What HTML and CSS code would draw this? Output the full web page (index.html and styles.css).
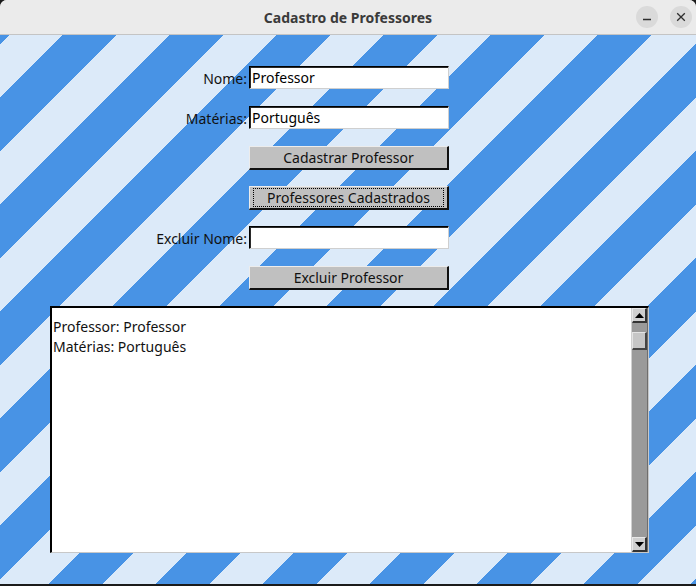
FILE: index.html
```html
<!DOCTYPE html>
<html lang="pt">
<head>
<meta charset="utf-8">
<title>Cadastro de Professores</title>
<link rel="stylesheet" href="styles.css">
</head>
<body>
<div class="window">
  <header class="titlebar">
    <span class="spacer"></span>
    <span class="title">Cadastro de Professores</span>
    <div class="controls">
      <span class="ctl">
        <svg width="22" height="22" viewBox="0 0 22 22"><path d="M7 13.5h8" stroke="#2e2e2e" stroke-width="1.3" fill="none"/></svg>
      </span>
      <span class="ctl">
        <svg width="22" height="22" viewBox="0 0 22 22"><path d="M7.2 7.2l7.6 7.6M14.8 7.2l-7.6 7.6" stroke="#2e2e2e" stroke-width="1.3" fill="none"/></svg>
      </span>
    </div>
  </header>
  <main class="client">
    <div class="form">
      <span class="lbl">Nome:</span><div class="entry">Professor</div>
      <span class="lbl">Matérias:</span><div class="entry">Português</div>
      <span class="lbl"></span><div class="btn">Cadastrar Professor</div>
      <span class="lbl"></span><div class="btn focused"><span class="focusring">Professores Cadastrados</span></div>
      <span class="lbl">Excluir Nome:</span><div class="entry"></div>
      <span class="lbl"></span><div class="btn">Excluir Professor</div>
    </div>
    <div class="textbox">
      <div class="text">Professor: Professor<br>Matérias: Português</div>
      <div class="scrollbar">
        <div class="arrow">
          <svg width="9" height="5" viewBox="0 0 9 5"><path d="M0 5L4.5 0L9 5Z" fill="#000"/></svg>
        </div>
        <div class="trough"><div class="slider"></div></div>
        <div class="arrow">
          <svg width="9" height="5" viewBox="0 0 9 5"><path d="M0 0L4.5 5L9 0Z" fill="#000"/></svg>
        </div>
      </div>
    </div>
  </main>
</div>
</body>
</html>
```
FILE: styles.css
```css
* { box-sizing: border-box; }
html, body { margin: 0; padding: 0; }
body {
  width: 696px;
  height: 586px;
  background: #1b1b1b;
  font-family: "Noto Sans", "DejaVu Sans", sans-serif;
  overflow: hidden;
}
.window {
  width: 696px;
  height: 584px;
  display: flex;
  flex-direction: column;
  border-radius: 7px 7px 0 0;
  overflow: hidden;
  background: #ebebeb;
}
.titlebar {
  height: 35px;
  flex: none;
  display: grid;
  grid-template-columns: 1fr auto 1fr;
  align-items: center;
  background: #ebebeb;
  border-bottom: 1px solid #c4c4c4;
}
.title {
  font-weight: bold;
  font-size: 14px;
  color: #3a3a3a;
}
.controls {
  justify-self: end;
  display: flex;
  gap: 12px;
  padding-right: 4px;
  padding-bottom: 1px;
}
.ctl {
  width: 22px;
  height: 22px;
  border-radius: 50%;
  background: #dadada;
  display: block;
}
.ctl svg { display: block; }
.client {
  flex: 1;
  background-color: #dceaf9;
  background-image: linear-gradient(135deg,
    #4893e5 0, #4893e5 25%,
    #dceaf9 25%, #dceaf9 50%,
    #4893e5 50%, #4893e5 75%,
    #dceaf9 75%, #dceaf9 100%);
  background-size: 107px 107px;
  background-position: 63px 0;
  padding-top: 31px;
  display: flex;
  flex-direction: column;
  gap: 16px;
}
.form {
  display: grid;
  grid-template-columns: 247px 200px;
  column-gap: 2px;
  grid-auto-rows: 24px;
  row-gap: 16px;
  font-size: 14px;
  color: #111;
}
.lbl {
  justify-self: end;
  align-self: center;
}
.entry {
  background: #fff;
  border-style: solid;
  border-width: 1px;
  border-color: #000 #cfcfcf #cfcfcf #000;
  box-shadow: inset 1px 1px 0 #2a2a2a;
  padding-left: 2px;
  line-height: 21px;
  height: 23px;
  color: #000;
}
.btn {
  background: #c0c0c0;
  border-style: solid;
  border-width: 1px 2px 2px 1px;
  border-color: #ececec #101010 #101010 #ececec;
  text-align: center;
  line-height: 21px;
  color: #111;
  padding: 0 2px;
}
.focusring {
  display: block;
  outline: 1px dotted #000;
  outline-offset: -1px;
  margin: 1px 1px 0;
  line-height: 19px;
}
.textbox {
  margin-left: 50px;
  width: 599px;
  height: 247px;
  background: #fff;
  border-style: solid;
  border-width: 2px 1px 1px 2px;
  border-color: #000 #c8c8c8 #c8c8c8 #000;
  display: flex;
}
.text {
  flex: 1;
  font-size: 14px;
  line-height: 20px;
  color: #111;
  padding: 9px 0 0 1px;
}
.scrollbar {
  width: 17px;
  display: flex;
  flex-direction: column;
  background: #9a9a9a;
  border-left: 1px solid #d0d0d0;
  border-right: 1px solid #6e6e6e;
}
.arrow {
  height: 15px;
  flex: none;
  background: #cfcfcf;
  border-style: solid;
  border-width: 1px 2px 2px 1px;
  border-color: #e8e8e8 #333 #333 #e8e8e8;
  display: flex;
  align-items: center;
  justify-content: center;
}
.trough {
  flex: 1;
  padding-top: 9px;
}
.slider {
  height: 18px;
  background: #c6c6c6;
  border-style: solid;
  border-width: 1px 2px 2px 1px;
  border-color: #e4e4e4 #444 #444 #e4e4e4;
}
```
